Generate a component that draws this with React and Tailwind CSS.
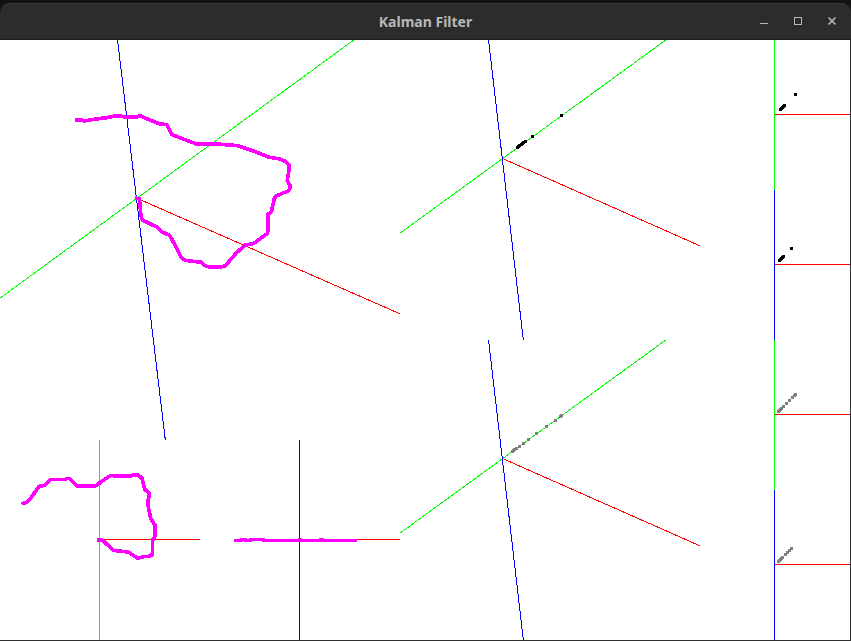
const AXIS = { x: "#ff0000", y: "#00ff00", z: "#0000ff" };

function View({ size, label, axes, dots = [], dotColor = "#000000", children }) {
  return (
    <svg
      viewBox={`0 0 ${size} ${size}`}
      className="block w-full"
      shapeRendering="crispEdges"
      role="img"
      aria-label={label}
    >
      {axes.map(([axis, x1, y1, x2, y2]) => (
        <line key={axis} x1={x1 + 0.5} y1={y1 + 0.5} x2={x2 + 0.5} y2={y2 + 0.5} stroke={AXIS[axis]} />
      ))}
      {dots.map(([x, y]) => (
        <rect key={`${x}-${y}`} x={x} y={y} width="3" height="3" fill={dotColor} />
      ))}
      {children}
    </svg>
  );
}

function Trail({ points, transform }) {
  return (
    <polyline
      points={points}
      transform={transform}
      fill="none"
      stroke="#ff00ff"
      strokeWidth="11"
      strokeLinecap="square"
      strokeLinejoin="round"
    />
  );
}

const PERSPECTIVE = [
  ["x", 102, 118, 301, 206],
  ["y", -1, 193, 266, -1],
  ["z", 88, -1, 123, 301],
];
const TOP = [["x", 74, 74, 150, 74], ["y", 74, -1, 74, 150]];
const SIDE = [["x", 74, 74, 150, 74], ["z", 74, -1, 74, 150]];

const TRAIL_3D =
  "50,91 68,91 72,93 90,90 110,87 140,83 160,79 186,79 196,82 228,82 234,79 244,79 270,90 298,101 320,104 328,118 336,134 372,148 410,162 484,163 532,167 580,183 625,201 660,207 676,214 687,224 687,238 682,272 690,286 689,297 682,304 648,318 643,326 634,366 624,373 623,430 580,461 555,465 530,488 496,527 480,532 450,532 435,527 424,517 375,511 364,502 330,437 305,425 290,411 247,390 243,378 238,326 230,325";
const TRAIL_TOP =
  "70,220 78,218 92,205 117,169 134,166 150,149 195,149 199,146 208,146 232,168 284,169 310,151 332,136 348,138 394,138 402,134 416,136 426,145 434,178 448,190 443,222 452,265 466,287 464,322 458,330 457,374 446,379 430,380 414,385 384,366 340,361 308,331 298,331";
const TRAIL_SIDE = [
  [34, 99, 9], [40, 98, 7], [44, 99, 8], [49, 98, 16],
  [62, 99, 95], [98, 98, 4], [119, 98, 5],
];

function TitleButton({ label, children }) {
  return (
    <button type="button" aria-label={label} className="flex size-6 items-center justify-center pb-px">
      <svg viewBox="0 0 10 10" className="size-[10px]" fill="none" stroke="#b8b8b8">
        {children}
      </svg>
    </button>
  );
}

export default function App() {
  return (
    <main className="w-full border-r border-b border-[#2e2f31] bg-white">
      <div className="-mr-px bg-[#131313] pt-[3px]">
        <header className="grid h-[37px] grid-cols-[1fr_auto_1fr] items-center rounded-t-[10px] border-t border-b border-t-[#3a3a3a] border-b-[#1c1c1c] bg-[#2c2c2c] px-[7px]">
          <span />
          <h1 className="font-['Noto_Sans',sans-serif] text-[14px] leading-5 font-bold text-[#b8b8b8]">
            Kalman Filter
          </h1>
          <div className="flex justify-end gap-[10px]">
            <TitleButton label="Minimize">
              <path d="M1 7.5H9" shapeRendering="crispEdges" />
            </TitleButton>
            <TitleButton label="Maximize">
              <path d="M1.500 1.500H8.500V8.500H1.500Z" shapeRendering="crispEdges" />
            </TitleButton>
            <TitleButton label="Close">
              <path d="M1.500 1.500L8.500 8.500M8.500 1.500L1.500 8.500" strokeWidth="1.600" />
            </TitleButton>
          </div>
        </header>
      </div>
      <div className="grid grid-cols-[8fr_6fr_3fr]">
        <div>
          <View
            size={400}
            label="Estimated path, perspective"
            axes={[["x", 137, 158, 401, 274], ["y", -1, 258, 354, -1], ["z", 117, -1, 165, 401]]}
          >
            <Trail points={TRAIL_3D} transform="translate(60 50) scale(0.33333)" />
          </View>
          <div className="grid grid-cols-2">
            <View size={200} label="Estimated path, top" axes={[["y", 99, -1, 99, 200], ["x", 99, 99, 200, 99]]}>
              <Trail points={TRAIL_TOP} transform="translate(0 -10) scale(0.33333)" />
            </View>
            <View size={200} label="Estimated path, side" axes={[["x", 99, 99, 200, 99], ["z", 99, -1, 99, 200]]}>
              {TRAIL_SIDE.map(([x, y, w]) => (
                <rect key={x} x={x} y={y} width={w} height="3" fill="#ff00ff" />
              ))}
            </View>
          </div>
        </div>
        <div>
          <View
            size={300}
            label="Measurements, perspective"
            axes={PERSPECTIVE}
            dots={[[160, 74], [131, 95], [116, 106], [117, 105], [118, 104], [120, 103], [121, 102], [122, 101], [124, 100]]}
          />
          <View
            size={300}
            label="Predictions, perspective"
            axes={PERSPECTIVE}
            dotColor="#808080"
            dots={[[159, 75], [160, 74], [154, 79], [145, 85], [135, 92], [127, 98], [122, 102], [118, 105], [115, 107], [113, 108], [112, 109], [111, 110]]}
          />
        </div>
        <div>
          <View size={150} label="Measurements, top" axes={TOP} dots={[[94, 53], [79, 68], [80, 67], [81, 66], [82, 65], [83, 64]]} />
          <View size={150} label="Measurements, side" axes={SIDE} dots={[[90, 57], [78, 69], [79, 68], [80, 67], [81, 66], [82, 65]]} />
          <View
            size={150}
            label="Predictions, top"
            axes={TOP}
            dotColor="#808080"
            dots={[[94, 53], [93, 54], [91, 56], [88, 59], [85, 62], [82, 65], [80, 67], [79, 68], [78, 69], [77, 70]]}
          />
          <View
            size={150}
            label="Predictions, side"
            axes={SIDE}
            dotColor="#808080"
            dots={[[90, 57], [88, 59], [86, 61], [84, 63], [81, 66], [80, 67], [79, 68], [78, 69], [77, 70]]}
          />
        </div>
      </div>
    </main>
  );
}
